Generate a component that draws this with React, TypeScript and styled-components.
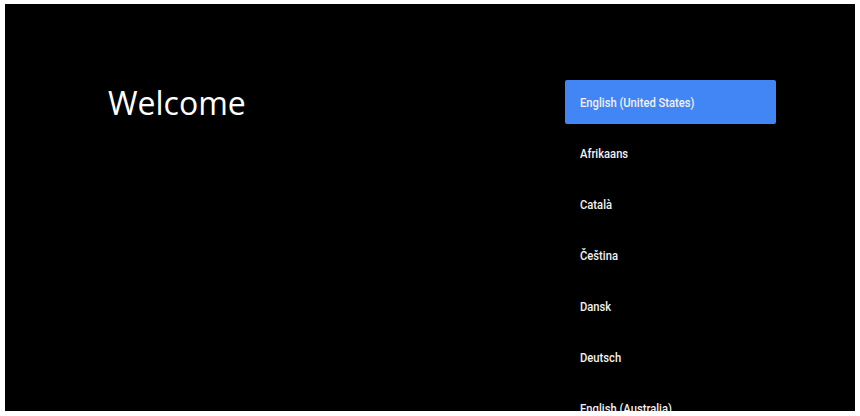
import React from "react";
import styled, { createGlobalStyle } from "styled-components";

const languages = [
  "English (United States)",
  "Afrikaans",
  "Català",
  "Čeština",
  "Dansk",
  "Deutsch",
  "English (Australia)",
  "English (Canada)",
];

const App = () => {
  return (
    <>
      <GlobalStyle />
      <Page>
        <Screen>
          <Intro>
            <Title>Welcome</Title>
          </Intro>
          <LanguageList>
            {languages.map((name, i) => (
              <LanguageItem key={name} $selected={i === 0}>
                <Label>{name}</Label>
              </LanguageItem>
            ))}
          </LanguageList>
        </Screen>
      </Page>
    </>
  );
};

const GlobalStyle = createGlobalStyle`
  html, body {
    margin: 0;
    padding: 0;
    background: #ffffff;
  }
`;

const Page = styled.div`
  width: 860px;
  height: 416px;
  box-sizing: border-box;
  padding: 4px 5px 5px 5px;
  background: #ffffff;
`;

const Screen = styled.div`
  height: 100%;
  background: #000000;
  overflow: hidden;
  display: grid;
  grid-template-columns: 1fr 211px;
  padding-right: 79px;
`;

const Intro = styled.div`
  padding: 79px 0 0 103px;
`;

const Title = styled.h1`
  margin: 0;
  font-family: "Open Sans", "Liberation Sans", sans-serif;
  font-weight: 400;
  font-size: 32px;
  line-height: 40px;
  color: #ffffff;
`;

const LanguageList = styled.ul`
  list-style: none;
  margin: 0;
  padding: 76px 0 0 0;
  display: flex;
  flex-direction: column;
  gap: 7px;
`;

const LanguageItem = styled.li<{ $selected?: boolean }>`
  height: 44px;
  flex-shrink: 0;
  display: flex;
  align-items: center;
  padding-left: 15px;
  border-radius: 2px;
  background: ${(p) => (p.$selected ? "#4285f4" : "transparent")};
  color: #f2f2f2;
`;

const Label = styled.span`
  display: inline-block;
  font-family: Roboto, "Liberation Sans", sans-serif;
  font-size: 13.5px;
  font-weight: 500;
  white-space: nowrap;
  transform: scaleX(0.83);
  transform-origin: left center;
`;

export default App;
